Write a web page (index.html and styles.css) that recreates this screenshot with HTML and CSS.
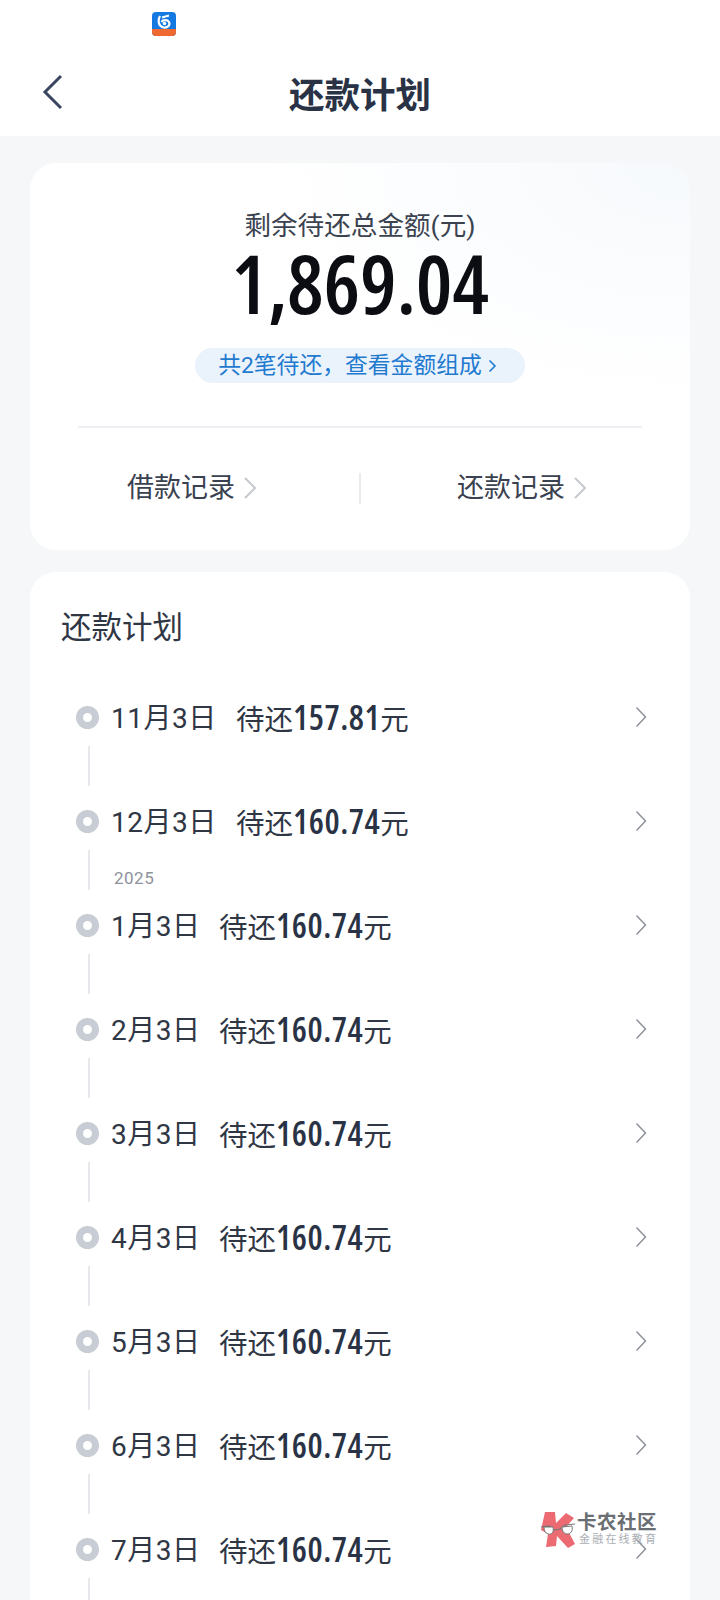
FILE: index.html
```html
<!DOCTYPE html>
<html lang="zh">
<head>
<meta charset="utf-8">
<title>还款计划</title>
<link rel="stylesheet" href="styles.css">
</head>
<body>
<div class="page">
  <header class="top">
    <div class="status">
      <svg class="app-icon" width="24" height="24" viewBox="0 0 24 24">
        <rect width="24" height="24" rx="4" fill="#1479e0"/>
        <path d="M0 17h24v3a4 4 0 0 1-4 4H4a4 4 0 0 1-4-4z" fill="#ee6a32"/>
        <path d="M8 4C5.500 8 6 14 11.500 15.500C16 16 18.500 13 17 10C15.500 7.500 11 7.500 9.500 10" fill="none" stroke="#fff" stroke-width="2.200"/>
        <path d="M10 5.500L17 3.500" stroke="#fff" stroke-width="2"/>
        <circle cx="12.500" cy="11.500" r="1.800" fill="#fff"/>
      </svg>
    </div>
    <div class="nav">
      <svg class="back" width="22" height="36" viewBox="0 0 22 36"><path d="M19 2L3 18l16 16" fill="none" stroke="#3a4560" stroke-width="3"/></svg>
      <h1 class="nav-title">还款计划</h1>
    </div>
  </header>

  <main class="content">
    <section class="card summary">
      <div class="sum-label">剩余待还总金额(元)</div>
      <div class="sum-amount">1,869.04</div>
      <div class="pill">共2笔待还，查看金额组成<svg class="pill-arrow" width="9" height="14" viewBox="0 0 9 14"><path d="M1.500 1.500L7 7l-5.500 5.500" fill="none" stroke="#1f7ad0" stroke-width="1.600"/></svg></div>
      <div class="links">
        <div class="link link-left">借款记录<svg width="14" height="24" viewBox="0 0 14 24"><path d="M2 2l10 10L2 22" fill="none" stroke="#c6c9ce" stroke-width="2"/></svg></div>
        <div class="link link-right">还款记录<svg width="14" height="24" viewBox="0 0 14 24"><path d="M2 2l10 10L2 22" fill="none" stroke="#c6c9ce" stroke-width="2"/></svg></div>
      </div>
    </section>

    <section class="card plan">
      <h2 class="plan-title">还款计划</h2>
      <ul class="rows">
        <li class="row"><span class="dot"></span><span class="date">11月3日</span><span class="due">待还<b class="num">157.81</b>元</span><svg class="chev" width="12" height="22" viewBox="0 0 12 22"><path d="M1.500 1.500L10.500 11l-9 9.500" fill="none" stroke="#8d929b" stroke-width="1.500"/></svg></li>
        <li class="row"><span class="dot"></span><span class="date">12月3日</span><span class="due">待还<b class="num">160.74</b>元</span><svg class="chev" width="12" height="22" viewBox="0 0 12 22"><path d="M1.500 1.500L10.500 11l-9 9.500" fill="none" stroke="#8d929b" stroke-width="1.500"/></svg><span class="year">2025</span></li>
        <li class="row"><span class="dot"></span><span class="date short">1月3日</span><span class="due">待还<b class="num">160.74</b>元</span><svg class="chev" width="12" height="22" viewBox="0 0 12 22"><path d="M1.500 1.500L10.500 11l-9 9.500" fill="none" stroke="#8d929b" stroke-width="1.500"/></svg></li>
        <li class="row"><span class="dot"></span><span class="date short">2月3日</span><span class="due">待还<b class="num">160.74</b>元</span><svg class="chev" width="12" height="22" viewBox="0 0 12 22"><path d="M1.500 1.500L10.500 11l-9 9.500" fill="none" stroke="#8d929b" stroke-width="1.500"/></svg></li>
        <li class="row"><span class="dot"></span><span class="date short">3月3日</span><span class="due">待还<b class="num">160.74</b>元</span><svg class="chev" width="12" height="22" viewBox="0 0 12 22"><path d="M1.500 1.500L10.500 11l-9 9.500" fill="none" stroke="#8d929b" stroke-width="1.500"/></svg></li>
        <li class="row"><span class="dot"></span><span class="date short">4月3日</span><span class="due">待还<b class="num">160.74</b>元</span><svg class="chev" width="12" height="22" viewBox="0 0 12 22"><path d="M1.500 1.500L10.500 11l-9 9.500" fill="none" stroke="#8d929b" stroke-width="1.500"/></svg></li>
        <li class="row"><span class="dot"></span><span class="date short">5月3日</span><span class="due">待还<b class="num">160.74</b>元</span><svg class="chev" width="12" height="22" viewBox="0 0 12 22"><path d="M1.500 1.500L10.500 11l-9 9.500" fill="none" stroke="#8d929b" stroke-width="1.500"/></svg></li>
        <li class="row"><span class="dot"></span><span class="date short">6月3日</span><span class="due">待还<b class="num">160.74</b>元</span><svg class="chev" width="12" height="22" viewBox="0 0 12 22"><path d="M1.500 1.500L10.500 11l-9 9.500" fill="none" stroke="#8d929b" stroke-width="1.500"/></svg></li>
        <li class="row"><span class="dot"></span><span class="date short">7月3日</span><span class="due">待还<b class="num">160.74</b>元</span><svg class="chev" width="12" height="22" viewBox="0 0 12 22"><path d="M1.500 1.500L10.500 11l-9 9.500" fill="none" stroke="#8d929b" stroke-width="1.500"/></svg></li>
      </ul>
    </section>
  </main>

  <div class="watermark">
    <svg width="36" height="36" viewBox="0 0 36 36">
      <path d="M4 0h10l1 11L25 1l8 5-8 9 9 17-7 4-11-12-1 10-10 1 2-13-7-4z" fill="#ec6a72"/>
      <path d="M0 15l8-1 5 4 6-1 5-4 10-1" fill="none" stroke="#777" stroke-width="1.200"/>
      <path d="M3 15h9c1 5-1 8-5 7-3-1-4-4-4-7zM21 15l10-1c1 5-1 8-5 8-3 0-5-3-5-7z" fill="#fff" stroke="#777" stroke-width="1"/>
    </svg>
    <div class="wm-text">
      <div class="wm-main">卡农社区</div>
      <div class="wm-sub">金融在线教育</div>
    </div>
  </div>
</div>
</body>
</html>
```

FILE: styles.css
```css
* { box-sizing: border-box; }
html, body { margin: 0; padding: 0; }
body {
  width: 720px;
  height: 1600px;
  overflow: hidden;
  background: #f5f7f9;
  font-family: "Roboto", "Noto Sans CJK SC", sans-serif;
  color: #2d3444;
}
.page { position: relative; width: 720px; height: 1600px; overflow: hidden; }

.top { background: #fff; height: 136px; }
.status { height: 52px; padding: 12px 0 0 152px; }
.app-icon { display: block; }
.nav { position: relative; height: 84px; display: flex; align-items: center; justify-content: center; padding-top: 4px; }
.back { position: absolute; left: 42px; top: 22px; }
.nav-title { margin: 0; font-size: 35.500px; line-height: 44px; font-weight: 700; color: #2a3346; }

.content { padding: 27px 30px 0; display: flex; flex-direction: column; gap: 22px; }
.card { background: #fff; border-radius: 26px; }

.summary {
  height: 387px;
  padding: 48px 48px 0;
  display: flex;
  flex-direction: column;
  align-items: center;
  background: radial-gradient(ellipse 420px 240px at 100% 0, #f6f9fc 0, #fcfdfe 65%, #fff 100%);
}
.sum-label { font-size: 26.600px; line-height: 30px; margin-bottom: 1px; color: #3c4350; }
.sum-amount {
  font-family: "Open Sans", "Liberation Sans", sans-serif;
  font-stretch: 75%;
  font-size: 82px;
  line-height: 80px;
  font-weight: 600;
  letter-spacing: -0.200px;
  color: #0b0d12;
}
.pill {
  margin-top: 26px;
  width: 330px;
  height: 35px;
  padding-right: 5px;
  border-radius: 18px;
  background: #eaf3fc;
  color: #1f7ad0;
  font-size: 22.800px;
  line-height: 35px;
  display: flex;
  align-items: center;
  justify-content: center;
  gap: 6px;
}
.pill-arrow { flex: none; }
.links {
  align-self: stretch;
  margin-top: 43px;
  padding-top: 45px;
  border-top: 2px solid #eeeff2;
  display: flex;
  position: relative;
}
.links::after {
  content: "";
  position: absolute;
  left: 281px;
  top: 45px;
  width: 2px;
  height: 31px;
  background: #eaebee;
}
.link {
  flex: 0 0 50%;
  display: flex;
  align-items: center;
  justify-content: center;
  gap: 8px;
  font-size: 27px;
  line-height: 30px;
  color: #3a4150;
}
.link-left { padding-right: 54px; }
.link-right { padding-left: 42px; }

.plan { min-height: 1100px; padding: 36px 0 0 31px; }
.plan-title { margin: 0; font-size: 30.500px; line-height: 40px; font-weight: 400; color: #2f3644; }
.rows { list-style: none; margin: 52px 0 0; padding: 0 0 0 15px; }
.row {
  position: relative;
  height: 104px;
  display: flex;
  align-items: flex-start;
  font-size: 28.500px;
  line-height: 36px;
}
.row::after {
  content: "";
  position: absolute;
  left: 12px;
  top: 46px;
  width: 2px;
  height: 40px;
  background: #e6e8ec;
}
.dot {
  flex: none;
  width: 23px;
  height: 23px;
  margin-top: 6px;
  border-radius: 50%;
  border: 7px solid #c8ccd4;
  background: #fff;
}
.date { margin-left: 12px; padding-top: 1px; width: 125px; font-size: 28px; letter-spacing: 0.500px; color: #2f3644; }
.date.short { width: 108px; }
.due { color: #2f3644; margin-top: -1px; }
.num {
  font-family: "Open Sans", "Liberation Sans", sans-serif;
  font-stretch: 75%;
  font-size: 34px;
  font-weight: 600;
  letter-spacing: 0.500px;
  color: #2a3346;
}
.chev { position: absolute; left: 559px; top: 6px; }
.year {
  position: absolute;
  left: 38px;
  top: 62px;
  font-size: 17px;
  line-height: 24px;
  color: #8d929b;
  letter-spacing: 0.500px;
}

.watermark {
  position: absolute;
  left: 541px;
  top: 1512px;
  display: flex;
  gap: 0;
  align-items: center;
}
.wm-text { display: flex; flex-direction: column; }
.wm-main { font-size: 19.500px; line-height: 20px; font-weight: 700; color: #6b6f74; letter-spacing: 0.500px; }
.wm-sub { font-size: 11px; line-height: 14px; color: #aaaeb3; letter-spacing: 2.200px; padding-left: 2px; }
```
